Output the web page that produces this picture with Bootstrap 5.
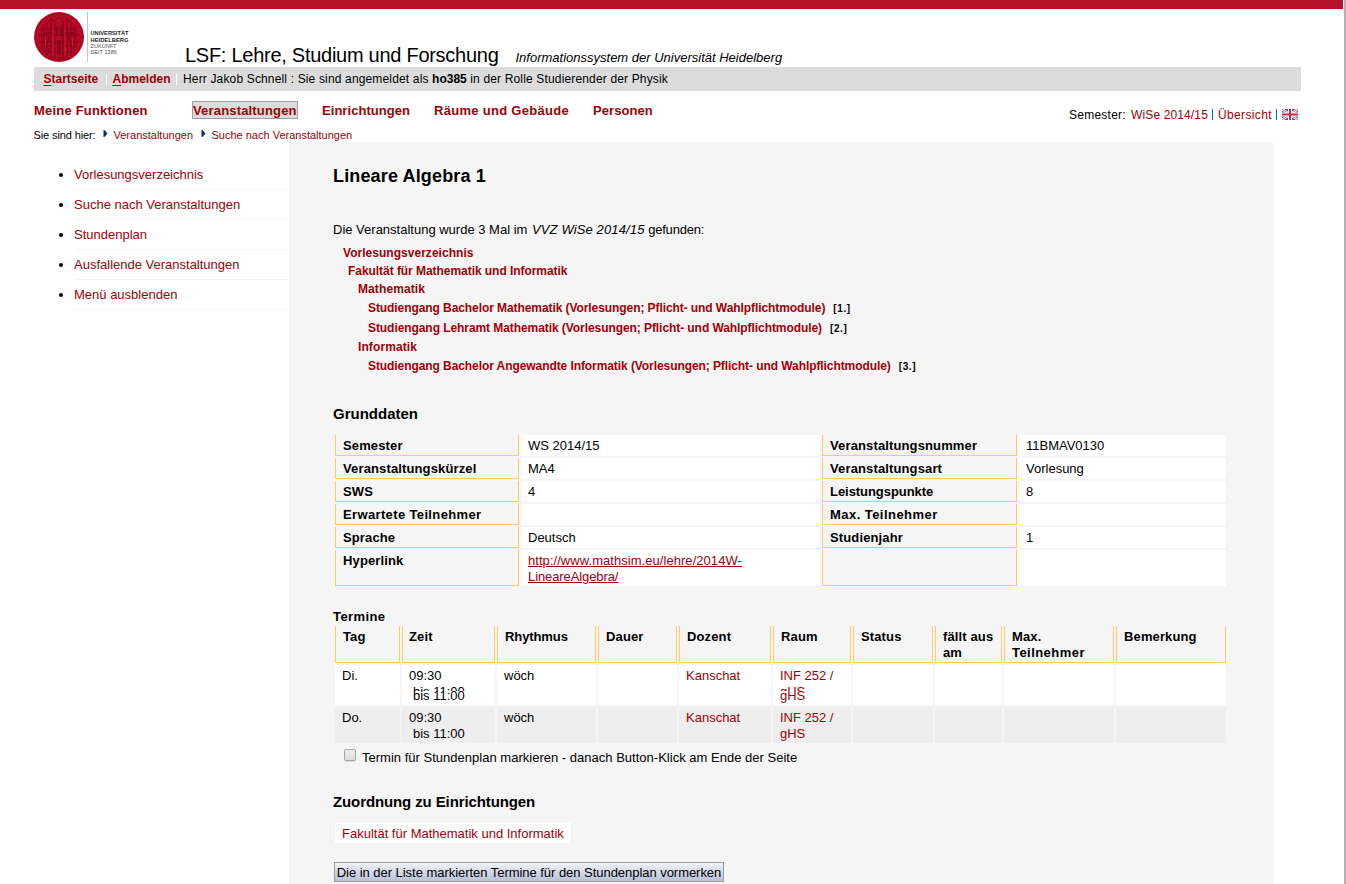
<!DOCTYPE html>
<html lang="de">
<head>
<meta charset="utf-8">
<title>LSF: Lehre, Studium und Forschung</title>
<link href="https://cdn.jsdelivr.net/npm/bootstrap@5.3.0/dist/css/bootstrap.min.css" rel="stylesheet">
<style>
  body { font: 13px/16px "Liberation Sans", Arial, sans-serif; color: #000; background: #fff; height: 884px; overflow: hidden; }
  a { color: #a00006; text-decoration: none; }
  b, th, h1, h2 { letter-spacing: .2px; }
  .page-edge { width: 2px; background: #b1b1b1; }
  .page-body { margin-right: 1px; }
  .stripe { height: 9px; background: #b5152b; }
  .masthead { height: 58px; padding-left: 34px; }
  .site-title { font-size: 20px; line-height: 20px; letter-spacing: -.27px; padding: 36px 0 2px; margin-left: 55px; }
  .site-sub { margin-left: 17px; font-size: 13px; letter-spacing: 0; }
  .user-bar { margin: 0 42px 0 34px; height: 24px; background: #dcdcdc; font-size: 12px; line-height: 24px; padding-left: 9.5px; letter-spacing: .155px; }
  .user-bar b { letter-spacing: 0; }
  .user-bar u { text-decoration-thickness: 1px; text-underline-offset: 2px; }
  .login-note { padding-left: 6.5px; }
  .sep { width: 1px; height: 11px; background: #fff; }
  .main-nav { height: 34px; padding: 10px 45px 0 34px; }
  .main-nav .tab { height: 18px; line-height: 20px; font-weight: bold; letter-spacing: .2px; }
  .main-nav .current { line-height: 18px; border: 1px solid #a0a0a0; background: #dcdcdc; width: 106px; margin-right: 24px; margin-left: 44px; letter-spacing: .17px; }
  .sem { font-size: 12px; letter-spacing: .25px; padding-top: 3px; }
  .sem i { width: 1px; height: 11px; background: #0070b8; }
  .crumbs { height: 17px; font-size: 11px; line-height: 16px; padding: 2px 0 0 33.5px; }
  .crumbs svg { margin-top: 2px; }
  .side { width: 289px; padding: 18px 1px 0 74px; }
  .side li { height: 30px; line-height: 29px; border-bottom: 1px solid #f2f2f2; position: relative; }
  .side li::before { content: ""; position: absolute; left: -15px; top: 13px; width: 4px; height: 4px; border-radius: 50%; background: #000; }
  .panel { width: 984px; min-height: 742px; background: #f5f5f5; padding: 22px 44px 0; }
  h1 { font-size: 18px; line-height: 24px; font-weight: bold; margin: 0 0 34px; letter-spacing: .15px; }
  h2 { font-size: 15px; line-height: 20px; font-weight: bold; margin: 0; letter-spacing: 0; }
  .vvz { letter-spacing: .13px; margin-left: 1px; }
  .tree { font-size: 12px; font-weight: bold; margin: 6px 0 28px; letter-spacing: -.078px; }
  .tree li { line-height: 18px; padding-left: 10px; }
  .tree .l1 { padding-left: 15px; letter-spacing: -.05px; }
  .tree .l2 { padding-left: 25px; letter-spacing: .1px; }
  .tree .l3 { padding-left: 35px; line-height: 20px; }
  .tree small { font-size: 10px; font-weight: bold; letter-spacing: .6px; margin-left: 8px; line-height: 1; }
  .facts { width: 895px; table-layout: fixed; border-collapse: separate; border-spacing: 2px; }
  .facts th, .facts td { vertical-align: top; padding: 3px 7px 0; height: 21px; }
  .facts th { background: #f5f5f5; border: 1px solid #fc6; border-top: 0; padding-bottom: 0; letter-spacing: .13px; }
  .facts td { background: #fff; }
  .facts .tall > * { height: 36px; padding-bottom: 0; }
  .dates th { height: 37px; padding-right: 0; }
  .dates td { height: 40px; padding-right: 0; }
  .dates .even td { height: 36px; background: #eee; }
  /* doubled band where two scroll captures overlap */
  .seam { display: block; position: relative; margin-top: 4px; }
  .seam::before { content: attr(data-line); position: absolute; left: 0; top: -4px; height: 7px; overflow: hidden; white-space: pre; }
  .ind { padding-left: 4px; }
  .ind.seam::before { left: 4px; }
  .mark-row { margin: 4px 0 25px; height: 18px; line-height: 18px; padding-left: 11px; letter-spacing: .013px; }
  .box { width: 12px; height: 12px; border: 1px solid #a5a5a5; border-radius: 2px; background: linear-gradient(#eee, #dcdcdc); margin-right: 6px; box-shadow: 0 1px 0 #ddd; }
  .unit { margin: 11px 0 19px 2px; width: 236px; height: 20px; line-height: 22px; padding-left: 7px; background: #fff; }
  .unit a { display: block; height: 20px; }
  .go { margin-left: 1px; width: 390px; height: 20px; border: 1px solid #9c9c9c; border-radius: 0; padding: 0; background: linear-gradient(#f0f2f6, #b8c1d8); color: #000; font-size: 13px; line-height: 19px; letter-spacing: -.04px; }
</style>
</head>
<body class="d-flex">
<div class="page-body flex-grow-1">
  <div class="stripe"></div>
  <header class="masthead d-flex">
    <svg width="96" height="58" viewBox="0 0 96 58" style="overflow:visible">
      <circle cx="25" cy="28" r="25" fill="#b80a26"/>
      <g fill="none" stroke="#85051b" stroke-width="1">
        <circle cx="25" cy="28" r="23.3" stroke-dasharray="2 1.5"/>
        <path d="M13 47V14q5-7 8 0v34M29 48V14q5-7 8 0v33M21 12q4-7 8 0v37M8 40V18M42 40V18M5 33h40M9 43h32M8 20h34M15 49h20M17 8v40M33 8v40M10 15v28M40 15v28M4 26h42"/>
        <path d="M10 24h9M31 24h9M23 17v10M27 17v10M15 27v5M35 27v5M11 37h8M31 37h8M23 35h4M17 15v8M33 15v8M24 31v15M26 31v15M15 39v5M34 39v5" stroke-width="1.6"/>
      </g>
      <path d="M19 19v27M31 19v27M11.500 29v8M38.500 29v8" stroke="#d8243b" fill="none" stroke-width=".7"/>
      <path d="M53.500 3v50" stroke="#c4c4c4"/>
      <g font-family="Liberation Sans, sans-serif" font-size="6" fill="#222">
        <text x="56.500" y="26.300" font-weight="bold" textLength="38" lengthAdjust="spacingAndGlyphs">UNIVERSITÄT</text>
        <text x="56.500" y="32.500" font-weight="bold" textLength="38" lengthAdjust="spacingAndGlyphs">HEIDELBERG</text>
        <text x="56.500" y="38.700" fill="#555" textLength="26" lengthAdjust="spacingAndGlyphs">ZUKUNFT</text>
        <text x="56.500" y="44.900" fill="#555" textLength="26.500" lengthAdjust="spacingAndGlyphs">SEIT 1386</text>
      </g>
    </svg>
    <div class="site-title">LSF: Lehre, Studium und Forschung<em class="site-sub">Informationssystem der Universität Heidelberg</em></div>
  </header>
  <div class="user-bar d-flex align-items-center">
    <a href="#" style="width:62px"><b><u>S</u>tartseite</b></a><span class="sep"></span>
    <a href="#" style="width:63px;margin-left:6px"><b><u>A</u>bmelden</b></a><span class="sep"></span>
    <span class="login-note">Herr Jakob Schnell : Sie sind angemeldet als <b>ho385</b> in der Rolle Studierender der Physik</span>
  </div>
  <nav class="main-nav d-flex">
    <a href="#" class="tab" style="width:114px">Meine Funktionen</a>
    <a href="#" class="tab current">Veranstaltungen</a>
    <a href="#" class="tab" style="width:112px;letter-spacing:.05px">Einrichtungen</a>
    <a href="#" class="tab" style="width:159px;letter-spacing:.29px">Räume und Gebäude</a>
    <a href="#" class="tab flex-grow-1" style="letter-spacing:.08px">Personen</a>
    <div class="sem d-flex align-items-center">
      <span style="width:62px">Semester:</span><a href="#" style="width:81px;letter-spacing:.13px">WiSe 2014/15</a><i style="margin-right:5px"></i>
      <a href="#" style="width:58px;letter-spacing:.35px">Übersicht</a><i style="margin-right:5px"></i>
      <svg width="16" height="11" viewBox="0 0 16 11"><path fill="#44599f" d="M0 0h16v11H0z"/><path d="M0 0l16 11M16 0L0 11" stroke="#fff" stroke-width="2.4"/><path d="M0 0l16 11M16 0L0 11" stroke="#e0566a" stroke-width=".9"/><path d="M8 0v11M0 5.500h16" stroke="#fff" stroke-width="4"/><path d="M8 0v11M0 5.500h16" stroke="#d8253d" stroke-width="2"/></svg>
    </div>
  </nav>
  <div class="crumbs d-flex">
    <span style="width:69px;letter-spacing:-.11px">Sie sind hier:</span>
    <svg width="11" height="9" viewBox="0 0 11 9"><path d="M0.500 1h1l3 3.500-3 3.500h-1z" fill="#036"/></svg>
    <a href="#" style="width:87px">Veranstaltungen</a>
    <svg width="11" height="9" viewBox="0 0 11 9"><path d="M0.500 1h1l3 3.500-3 3.500h-1z" fill="#036"/></svg>
    <a href="#">Suche nach Veranstaltungen</a>
  </div>
  <div class="d-flex">
    <aside class="side">
      <ul class="list-unstyled m-0">
        <li><a href="#">Vorlesungsverzeichnis</a></li>
        <li><a href="#">Suche nach Veranstaltungen</a></li>
        <li><a href="#">Stundenplan</a></li>
        <li><a href="#">Ausfallende Veranstaltungen</a></li>
        <li><a href="#">Menü ausblenden</a></li>
      </ul>
    </aside>
    <main class="panel">
      <h1>Lineare Algebra 1</h1>
      <div>Die Veranstaltung wurde 3 Mal im <em class="vvz">VVZ WiSe 2014/15</em> <span style="letter-spacing:-.2px">gefunden:</span></div>
      <ul class="tree list-unstyled">
        <li style="letter-spacing:.03px"><a href="#">Vorlesungsverzeichnis</a></li>
        <li class="l1"><a href="#">Fakultät für Mathematik und Informatik</a></li>
        <li class="l2"><a href="#">Mathematik</a></li>
        <li class="l3"><a href="#">Studiengang Bachelor Mathematik (Vorlesungen; Pflicht- und Wahlpflichtmodule)</a><small>[1.]</small></li>
        <li class="l3"><a href="#" style="letter-spacing:-.07px">Studiengang Lehramt Mathematik (Vorlesungen; Pflicht- und Wahlpflichtmodule)</a><small>[2.]</small></li>
        <li class="l2"><a href="#">Informatik</a></li>
        <li class="l3"><a href="#">Studiengang Bachelor Angewandte Informatik (Vorlesungen; Pflicht- und Wahlpflichtmodule)</a><small>[3.]</small></li>
      </ul>
      <h2>Grunddaten</h2>
      <table class="facts" style="margin-top:9px">
        <colgroup><col style="width:184px"><col style="width:299px"><col style="width:195px"><col style="width:207px"></colgroup>
        <tr><th>Semester</th><td>WS 2014/15</td><th>Veranstaltungsnummer</th><td>11BMAV0130</td></tr>
        <tr><th>Veranstaltungskürzel</th><td>MA4</td><th>Veranstaltungsart</th><td>Vorlesung</td></tr>
        <tr><th>SWS</th><td>4</td><th style="letter-spacing:-.05px">Leistungspunkte</th><td>8</td></tr>
        <tr><th style="letter-spacing:.36px">Erwartete Teilnehmer</th><td></td><th style="letter-spacing:.45px">Max. Teilnehmer</th><td></td></tr>
        <tr><th>Sprache</th><td>Deutsch</td><th>Studienjahr</th><td>1</td></tr>
        <tr class="tall"><th>Hyperlink</th><td><a href="#" class="text-decoration-underline"><span style="letter-spacing:.05px">http://www.mathsim.eu/lehre/2014W-</span><br><span style="letter-spacing:-.1px">LineareAlgebra/</span></a></td><th></th><td></td></tr>
      </table>
      <div style="margin-top:20px;position:relative;top:1px"><b style="letter-spacing:.4px">Termine</b></div>
      <table class="facts dates">
        <colgroup><col style="width:65px"><col style="width:93px"><col style="width:99px"><col style="width:79px"><col style="width:92px"><col style="width:78px"><col style="width:80px"><col style="width:67px"><col style="width:110px"><col style="width:110px"></colgroup>
        <tr><th>Tag</th><th style="padding-left:6px">Zeit</th><th style="letter-spacing:-.1px">Rhythmus</th><th>Dauer</th><th>Dozent</th><th>Raum</th><th>Status</th><th>fällt aus am</th><th>Max.<br><span style="letter-spacing:.45px">Teilnehmer</span></th><th>Bemerkung</th></tr>
        <tr><td>Di.</td><td>09:30<span class="seam ind" data-line="bis 11:00">bis 11:00</span></td><td>wöch</td><td></td><td><a href="#">Kanschat</a></td><td><a href="#">INF 252 /<span class="seam" data-line="gHS">gHS</span></a></td><td></td><td></td><td></td><td></td></tr>
        <tr class="even"><td>Do.</td><td>09:30<span class="d-block ind">bis 11:00</span></td><td>wöch</td><td></td><td><a href="#">Kanschat</a></td><td><a href="#">INF 252 /<br>gHS</a></td><td></td><td></td><td></td><td></td></tr>
      </table>
      <div class="mark-row d-flex"><span class="box"></span>Termin für Stundenplan markieren - danach Button-Klick am Ende der Seite</div>
      <h2 style="letter-spacing:-.11px">Zuordnung zu Einrichtungen</h2>
      <div class="unit"><a href="#">Fakultät für Mathematik und Informatik</a></div>
      <button type="button" class="go btn d-block">Die in der Liste markierten Termine für den Stundenplan vormerken</button>
    </main>
  </div>
</div>
<div class="page-edge"></div>
<script src="https://cdn.jsdelivr.net/npm/bootstrap@5.3.0/dist/js/bootstrap.bundle.min.js"></script>
</body>
</html>
